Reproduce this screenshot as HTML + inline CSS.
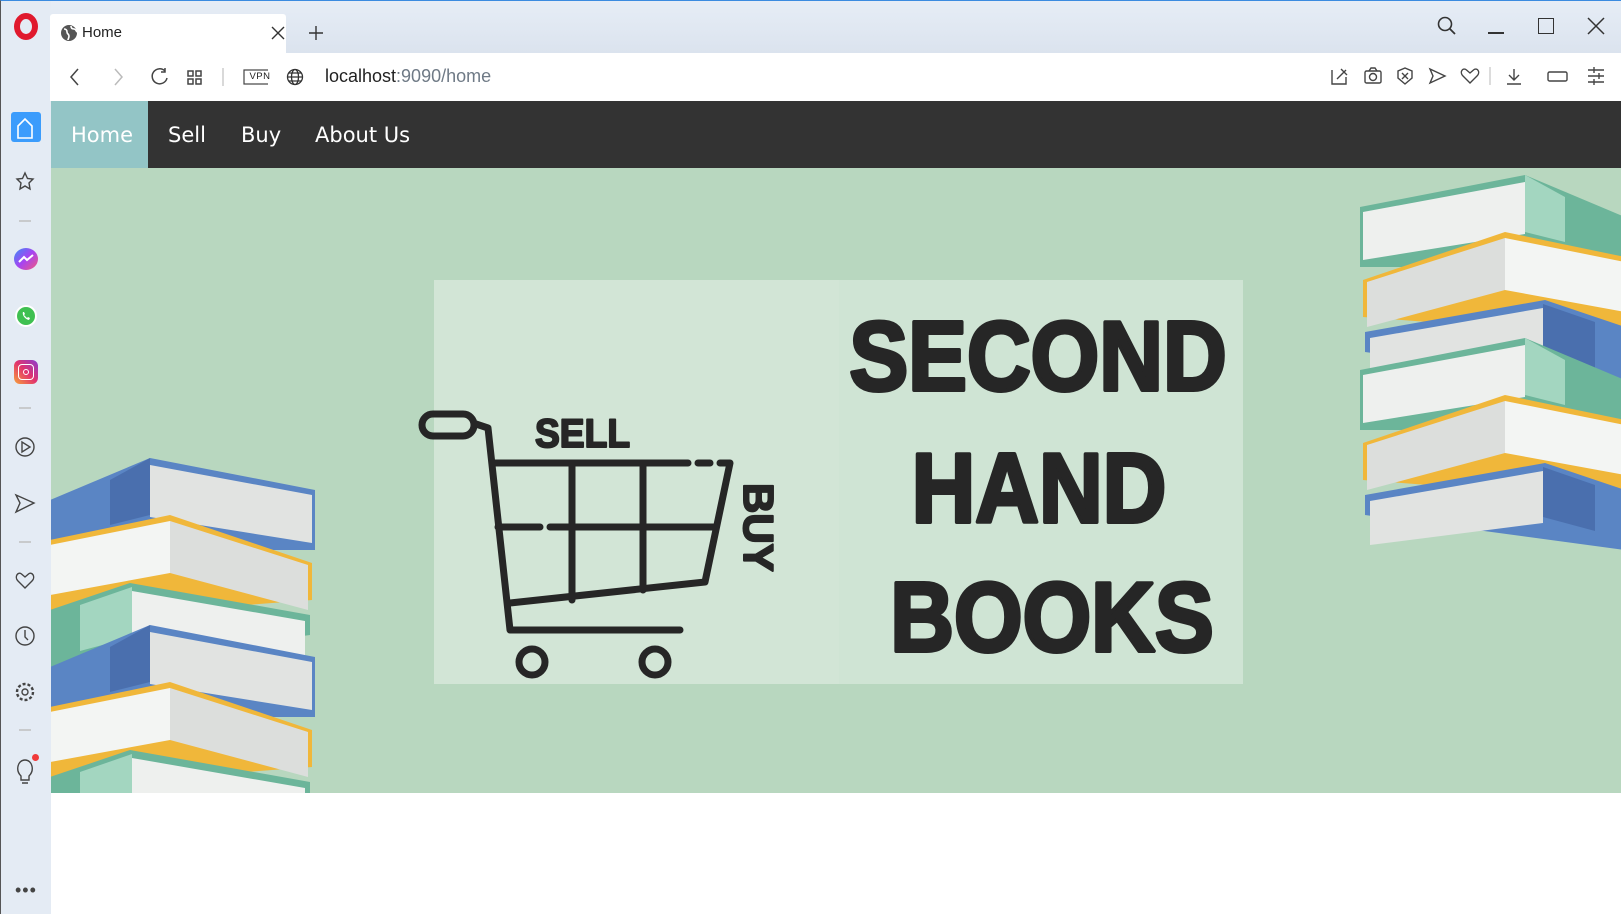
<!DOCTYPE html>
<html><head><meta charset="utf-8">
<style>
*{margin:0;padding:0;box-sizing:border-box}
html,body{width:1621px;height:914px;overflow:hidden;background:#fff;font-family:"Liberation Sans","DejaVu Sans",sans-serif}
.abs{position:absolute}
</style></head><body>
<div class="abs" style="left:0;top:0;width:1621px;height:914px;background:#fff;border-top:1px solid #3b8be0;border-left:1px solid #555"></div>
<div class="abs" style="left:1px;top:1px;width:1620px;height:52px;background:linear-gradient(#e6edf6,#dbe3ee)"></div>
<div class="abs" style="left:1px;top:1px;width:50px;height:913px;background:#e4ebf4"></div>
<div class="abs" style="left:14px;top:13px;width:24px;height:27px;border-radius:50%;border:6px solid #e0192d;"></div>
<div class="abs" style="left:50px;top:14px;width:236px;height:40px;background:#fff;border-radius:3px 3px 0 0"></div>
<svg class="abs" style="left:60px;top:24px" width="18" height="18" viewBox="0 0 18 18"><circle cx="9" cy="9" r="8" fill="#555"/><path d="M4 5c2 0 3 1 3 3s2 2 2 4-1 3-1 4M11 2c0 2 1 3 3 3s2 2 3 3" stroke="#fff" stroke-width="1.6" fill="none"/></svg>
<div class="abs" style="left:82px;top:24px;font-size:15px;color:#222">Home</div>
<svg class="abs" style="left:271px;top:26px" width="14" height="14"><path d="M1 1L13 13M13 1L1 13" stroke="#333" stroke-width="1.4"/></svg>
<svg class="abs" style="left:308px;top:25px" width="16" height="16"><path d="M8 1V15M1 8H15" stroke="#333" stroke-width="1.4"/></svg>
<svg class="abs" style="left:1436px;top:15px" width="22" height="22"><circle cx="9" cy="9" r="6.5" stroke="#333" stroke-width="1.6" fill="none"/><path d="M14 14L19 19" stroke="#333" stroke-width="1.8"/></svg>
<div class="abs" style="left:1488px;top:32px;width:16px;height:1.5px;background:#333"></div>
<div class="abs" style="left:1538px;top:18px;width:16px;height:16px;border:1.5px solid #333"></div>
<svg class="abs" style="left:1587px;top:17px" width="18" height="18"><path d="M1 1L17 17M17 1L1 17" stroke="#333" stroke-width="1.5"/></svg>
<div class="abs" style="left:50px;top:53px;width:1571px;height:48px;background:#fff"></div>
<svg class="abs" style="left:68px;top:66px" width="200" height="22" fill="none" stroke="#444" stroke-width="1.5">
<path d="M10 3L3 11L10 19"/><path d="M47 3L54 11L47 19" stroke="#bbb"/>
<path d="M97 5A7.5 7.5 0 1 0 99 12M97 2V6H93"/>
<rect x="120" y="5" width="5" height="5"/><rect x="128" y="5" width="5" height="5"/><rect x="120" y="13" width="5" height="5"/><rect x="128" y="13" width="5" height="5"/>
<path d="M155 2V20" stroke="#ccc"/>
<rect x="176" y="4" width="28" height="14" stroke-width="1.2"/>
</svg>
<div class="abs" style="left:246px;top:71px;width:28px;font-size:9.5px;color:#222;text-align:center;letter-spacing:0.5px">VPN</div>
<svg class="abs" style="left:285px;top:67px" width="20" height="20" fill="none" stroke="#333" stroke-width="1.3"><circle cx="10" cy="10" r="7.5"/><ellipse cx="10" cy="10" rx="3.5" ry="7.5"/><path d="M2.5 10H17.5M4 6H16M4 14H16"/></svg>
<div class="abs" style="left:325px;top:66px;font-size:18px;color:#222">localhost<span style="color:#6f7a86">:9090/home</span></div>
<svg class="abs" style="left:1328px;top:64px" width="290" height="24" fill="none" stroke="#444" stroke-width="1.4">
<path d="M4 6V20H18V13M9 15L18 6M13 5L19 11"/>
<rect x="37" y="7" width="16" height="12" rx="1.5"/><circle cx="45" cy="13" r="3.5"/><path d="M41 7L43 4H47L49 7"/>
<path d="M77 4L84 7V14L77 20L70 14V7Z"/><path d="M74 9L80 15M80 9L74 15"/>
<path d="M102 5L117 12L102 19L105 12Z"/>
<path d="M142 19L135 12C131 8 135 3 138.5 6L142 9L145.5 6C149 3 153 8 149 12Z"/>
<path d="M162 3V21" stroke="#ccc"/>
<path d="M186 5V16M181 11L186 16L191 11M179 20H193"/>
<rect x="220" y="8" width="19" height="9" rx="1.5"/>
<path d="M260 6H276M260 12H276M260 18H276M266 3V9M271 9V15M266 15V21"/>
</svg>
<div class="abs" style="left:11px;top:112px;width:30px;height:30px;background:#3b9cfc;border-radius:3px"></div>
<svg class="abs" style="left:0;top:100px" width="50" height="720" fill="none" stroke="#444" stroke-width="1.4">
<path d="M18 26V38H32V26L25 19Z" stroke="#fff" stroke-width="1.6"/>
<path d="M25 73L27.5 78.5L33 79L29 83L30 89L25 86L20 89L21 83L17 79L22.5 78.5Z"/>
<path d="M19 121H31" stroke="#bbb"/>
<path d="M19 308H31" stroke="#bbb"/>
<path d="M19 442H31" stroke="#bbb"/>
<path d="M19 630H31" stroke="#bbb"/>
<circle cx="25" cy="347" r="9"/><path d="M22 342V352L30 347Z"/>
<path d="M16 395L34 403L16 412L20 403Z"/>
<path d="M25 488L18 481C14 477 18 471 21.5 474L25 477L28.5 474C32 471 36 477 32 481Z"/>
<circle cx="25" cy="536" r="9"/><path d="M25 530V537L28 540"/>
<circle cx="25" cy="592" r="3"/><circle cx="25" cy="592" r="8" stroke-dasharray="3 2" stroke-width="2.4"/>
<path d="M21 676C15 670 18 660 25 660C32 660 35 670 29 676V680H21ZM22 683H28"/>
</svg>
<div class="abs" style="left:14px;top:248px;width:24px;height:22px;border-radius:50%;background:linear-gradient(135deg,#3a8cf7,#a744f1,#f25a7c)"></div>
<svg class="abs" style="left:17px;top:253px" width="18" height="12"><path d="M2 9L7 4L10 7L16 2" stroke="#fff" stroke-width="2" fill="none"/></svg>
<div class="abs" style="left:15px;top:305px;width:22px;height:22px;border-radius:50%;background:#3fc051;border:2px solid #fff"></div>
<svg class="abs" style="left:19px;top:309px" width="14" height="14"><path d="M4 3C3 5 5 10 10 11L11 9L9 8L8 9C7 8 6 7 5 6L6 5L5 3Z" fill="#fff"/></svg>
<div class="abs" style="left:14px;top:360px;width:24px;height:24px;border-radius:6px;background:linear-gradient(45deg,#f7a33a,#e2346c,#8a3bd1)"></div>
<div class="abs" style="left:18px;top:364px;width:16px;height:16px;border-radius:4px;border:1.8px solid #fff"></div>
<div class="abs" style="left:23px;top:369px;width:6px;height:6px;border-radius:50%;border:1.6px solid #fff"></div>
<div class="abs" style="left:32px;top:754px;width:7px;height:7px;border-radius:50%;background:#f03a3a"></div>
<div class="abs" style="left:15px;top:885px;font-size:18px;color:#444;letter-spacing:1px;line-height:10px">•••</div>
<div class="abs" style="left:51px;top:101px;width:1570px;height:67px;background:#333"></div>
<div class="abs" style="left:51px;top:101px;width:97px;height:67px;background:#93c5c6"></div>
<div class="abs" style="left:51px;top:123px;width:1000px;font-size:21px;color:#fff;font-family:'DejaVu Sans','Liberation Sans',sans-serif">
<span class="abs" style="left:20px">Home</span><span class="abs" style="left:117px">Sell</span><span class="abs" style="left:190px">Buy</span><span class="abs" style="left:264px;white-space:nowrap">About Us</span></div>
<svg class="abs" style="left:51px;top:168px" width="1570" height="625" viewBox="51 168 1570 625">
<defs>
<g id="set">
<polygon points="0,45 100,3 265,35 265,95 0,95" fill="#5a85c4"/>
<polygon points="60,25 100,3 100,60 60,70" fill="#4a6fae"/>
<polygon points="100,10 262,40 262,88 100,62" fill="#e1e3e1"/>
<polygon points="0,85 120,60 262,108 262,145 0,165" fill="#f0b73a"/>
<polygon points="0,90 120,66 120,118 0,140" fill="#f3f5f3"/>
<polygon points="120,66 258,110 258,155 120,118" fill="#dcdedc"/>
<polygon points="0,155 80,128 260,160 260,180 0,215" fill="#6cb59a"/>
<polygon points="30,150 82,132 82,182 30,196" fill="#a3d6c0"/>
<polygon points="82,136 255,166 255,210 82,188" fill="#eef0ee"/>
</g>
<g id="rset">
<polygon points="0,45 100,3 265,35 265,95 0,95" fill="#6cb59a"/>
<polygon points="60,25 100,3 100,60 60,70" fill="#a3d6c0"/>
<polygon points="100,10 262,40 262,88 100,62" fill="#eef0ee"/>
<polygon points="0,85 120,60 262,108 262,145 0,165" fill="#f0b73a"/>
<polygon points="0,90 120,66 120,118 0,140" fill="#f3f5f3"/>
<polygon points="120,66 258,110 258,155 120,118" fill="#dcdedc"/>
<polygon points="0,155 80,128 260,160 260,180 0,215" fill="#5a85c4"/>
<polygon points="30,150 82,132 82,182 30,196" fill="#4a6fae"/>
<polygon points="82,136 255,166 255,210 82,188" fill="#e1e3e1"/>
</g>
</defs>
<rect x="51" y="168" width="1570" height="625" fill="#b8d7bf"/>
<rect x="434" y="280" width="809" height="404" fill="#cfe4d4"/>
<rect x="434" y="280" width="405" height="404" fill="#d2e5d6"/>
<use href="#set" transform="translate(50,455)"/>
<use href="#set" transform="translate(50,622)"/>
<use href="#rset" transform="translate(1625,172) scale(-1,1)"/>
<use href="#rset" transform="translate(1625,335) scale(-1,1)"/>
<g fill="none" stroke="#262626" stroke-width="7" stroke-linecap="round" stroke-linejoin="round">
<rect x="422" y="414" width="52" height="22" rx="11"/>
<path d="M476 424L488 428L510 630H680"/>
<path d="M492 463H688M698 463H710M720 463H730L705 582L510 603"/>
<path d="M498 527H540M550 527H715"/>
<path d="M572 463V600M643 463V590"/>
<circle cx="532" cy="662" r="13"/><circle cx="655" cy="662" r="13"/>
</g>
<g font-family="Liberation Sans,sans-serif" font-weight="bold" fill="#262626" stroke="#262626" stroke-width="2" stroke-linejoin="round">
<text x="535" y="447" font-size="40" transform="translate(535,0) scale(0.93,1) translate(-535,0)">SELL</text>
<text x="0" y="0" font-size="42" transform="translate(744,483) rotate(90)">BUY</text>
<g font-size="98" text-anchor="middle" stroke-width="4">
<text x="1038" y="390" transform="translate(1038,0) scale(0.9,1) translate(-1038,0)">SECOND</text>
<text x="1039" y="522" transform="translate(1039,0) scale(0.9,1) translate(-1039,0)">HAND</text>
<text x="1052" y="651" transform="translate(1052,0) scale(0.9,1) translate(-1052,0)">BOOKS</text>
</g></g>
</svg>
</body></html>
